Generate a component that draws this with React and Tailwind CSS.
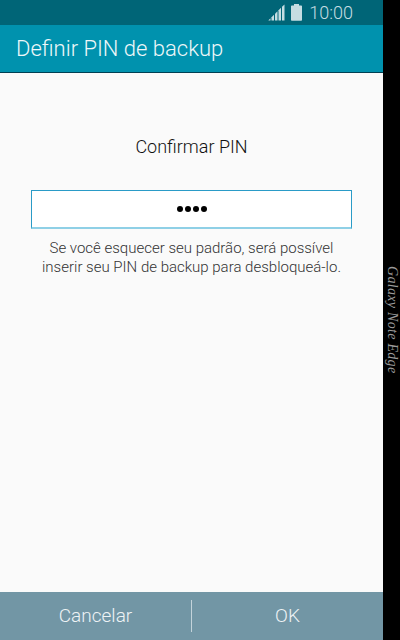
import React from 'react';

const SignalIcon = () => (
    <svg width="17" height="17" viewBox="0 0 17 17" fill="#c5dde2">
        <path d="M0.500 16.500h2v-2.300l-2 2z" />
        <path d="M3.500 16.500h2.500v-5.800l-2.500 2.500z" />
        <path d="M7 16.500h2.500V7.200L7 9.700z" />
        <path d="M10.500 16.500h2.500V3.700l-2.500 2.500z" />
        <path d="M14 16.500h2.500V0.500L14 2.700z" />
    </svg>
);

const BatteryIcon = () => (
    <svg width="11" height="17" viewBox="0 0 11 17" fill="#c5dde2">
        <path d="M3 0h5v1.500h2.200a.8.8 0 0 1 .8.8V16a.8.8 0 0 1-.8.8H.8A.8.8 0 0 1 0 16V2.300a.8.8 0 0 1 .8-.8H3z" />
    </svg>
);

const App = () => {
    return (
        <div className="flex w-[400px] h-[640px] bg-black font-['Roboto',sans-serif] overflow-hidden">
            <div className="flex flex-col w-[383px] h-full bg-[#fafafa]">
                <div className="flex items-center justify-end h-[25px] bg-[#006577] pr-[30px]">
                    <div className="mr-[6px] flex"><SignalIcon /></div>
                    <div className="mr-[7px] flex"><BatteryIcon /></div>
                    <span className="text-[18px] font-light leading-none text-[#c5dde2]">10:00</span>
                </div>
                <div className="flex items-center h-[48px] pl-4 bg-[#0092ae] border-b border-[#003f52]">
                    <span className="text-[22px] font-light text-[#eef7f9]">Definir PIN de backup</span>
                </div>
                <div className="flex flex-col flex-1 items-center">
                    <p className="mt-[63px] text-[18px] leading-[22px] font-light text-[#111111]">Confirmar PIN</p>
                    <div className="flex items-center justify-center w-[321px] h-[39px] mt-[32px] bg-white border border-[#2a9bc7] border-b-2 border-b-[#8fd0e6]">
                        <div className="flex gap-[2px]">
                            <span className="w-[6px] h-[6px] rounded-full bg-black"></span>
                            <span className="w-[6px] h-[6px] rounded-full bg-black"></span>
                            <span className="w-[6px] h-[6px] rounded-full bg-black"></span>
                            <span className="w-[6px] h-[6px] rounded-full bg-black"></span>
                        </div>
                    </div>
                    <p className="mt-[10px] text-[15px] leading-[19px] font-light text-center text-[#333333]">
                        Se você esquecer seu padrão, será possível<br />
                        inserir seu PIN de backup para desbloqueá-lo.
                    </p>
                </div>
                <div className="flex items-center h-[48px] bg-[#7296a5]">
                    <button className="flex-1 text-[19px] font-light text-[#eef3f5]">Cancelar</button>
                    <div className="w-px h-[32px] bg-[#c3d3da]"></div>
                    <button className="flex-1 text-[19px] font-light text-[#eef3f5]">OK</button>
                </div>
            </div>
            <div className="flex flex-1 justify-center pt-[266px]">
                <span className="[writing-mode:vertical-rl] italic text-[14px] tracking-[0.3px] leading-none text-[#9a9a9a] font-['Liberation_Serif',serif]">Galaxy Note Edge</span>
            </div>
        </div>
    );
};

export default App;
